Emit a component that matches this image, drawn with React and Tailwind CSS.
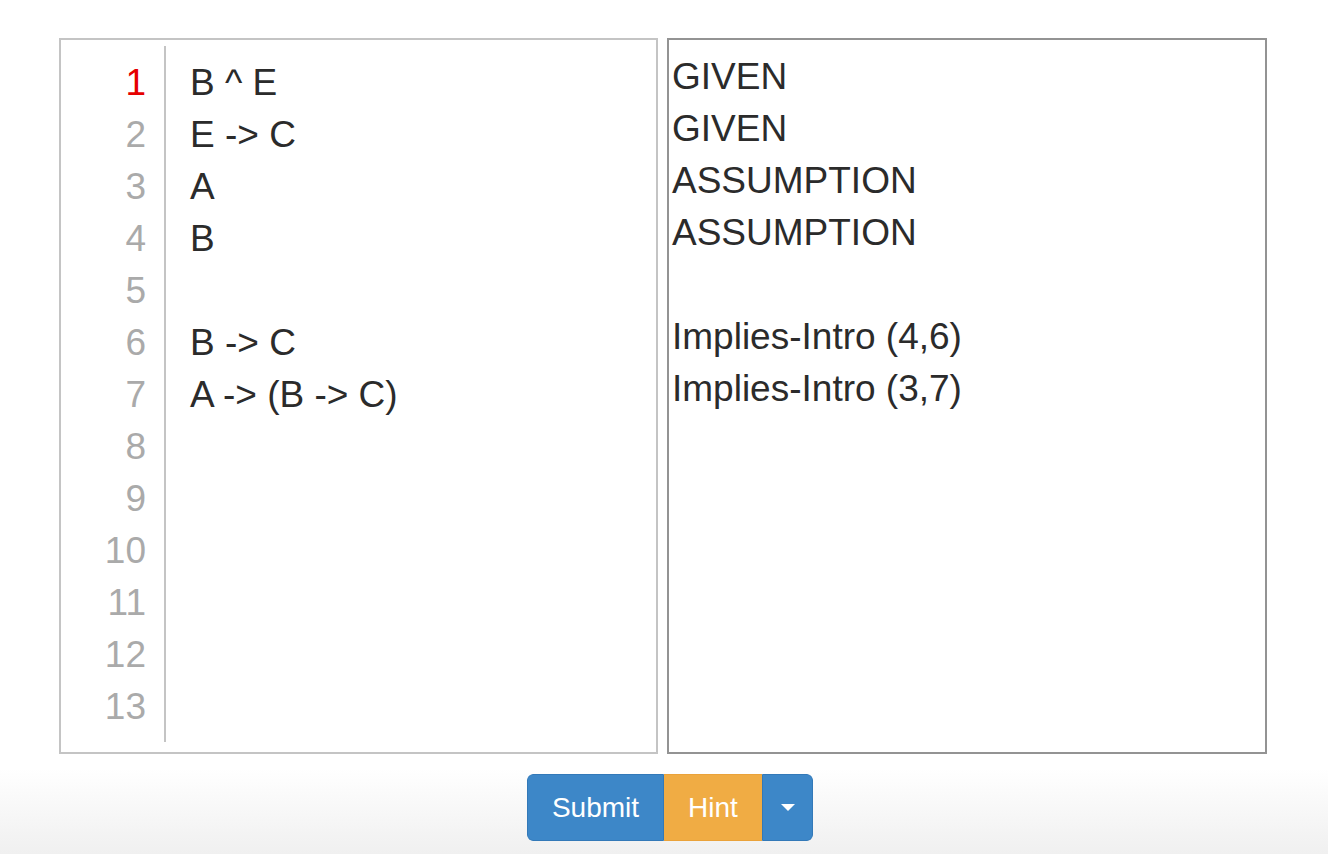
import { useState } from 'react';

const proofLines = ['B ^ E', 'E -> C', 'A', 'B', '', 'B -> C', 'A -> (B -> C)', '', '', '', '', '', ''];
const reasons = ['GIVEN', 'GIVEN', 'ASSUMPTION', 'ASSUMPTION', '', 'Implies-Intro (4,6)', 'Implies-Intro (3,7)'];

const App = () => {
  const [active] = useState(0);

  return (
    <div className="w-[1328px] h-[854px] bg-gradient-to-b from-white from-[90%] to-[#f0f0f0] font-['Liberation_Sans',Arial,sans-serif] text-[#333] overflow-hidden">
      <div className="pt-[38px] pl-[59px] flex gap-[9px]">
        {/* Editor */}
        <div className="w-[599px] h-[716px] border-2 border-[#c4c4c4] bg-white pt-[6px] pb-[10px]">
          <div className="flex h-full">
            <div className="w-[105px] border-r-2 border-[#c4c4c4] pt-[11px] pr-[18px] text-right text-[37px] leading-[52px]">
              {proofLines.map((_, i) => (
                <div key={i} className={i === active ? 'h-[52px] text-[#e60000]' : 'h-[52px] text-[#aaaaaa]'}>
                  {i + 1}
                </div>
              ))}
            </div>
            <div className="pl-[24px] pt-[11px] text-[37px] leading-[52px] text-[#2b2b2b]">
              {proofLines.map((line, i) => (
                <div key={i} className="h-[52px] whitespace-pre">{line}</div>
              ))}
            </div>
          </div>
        </div>

        {/* Justifications */}
        <div className="w-[600px] h-[716px] border-2 border-[#939393] bg-white pl-[3px] pt-[11px] text-[37px] leading-[52px] text-[#2b2b2b]">
          {reasons.map((r, i) => (
            <div key={i} className="h-[52px] whitespace-pre">{r}</div>
          ))}
        </div>
      </div>

      {/* Buttons */}
      <div className="flex justify-center pt-[20px] pl-[12px]">
        <div className="flex h-[67px] rounded-[6px] overflow-hidden text-white text-[28px]">
          <button className="w-[137px] bg-[#3d87c8] border border-[#3379b8] rounded-l-[6px]">Submit</button>
          <button className="w-[98px] bg-[#f0ac44] border-y border-[#eaa23a]">Hint</button>
          <button className="w-[51px] bg-[#3d87c8] border border-[#3379b8] rounded-r-[6px] flex items-center justify-center">
            <span className="w-0 h-0 border-l-[7px] border-r-[7px] border-t-[7px] border-l-transparent border-r-transparent border-t-white" />
          </button>
        </div>
      </div>
    </div>
  );
};

export default App;
